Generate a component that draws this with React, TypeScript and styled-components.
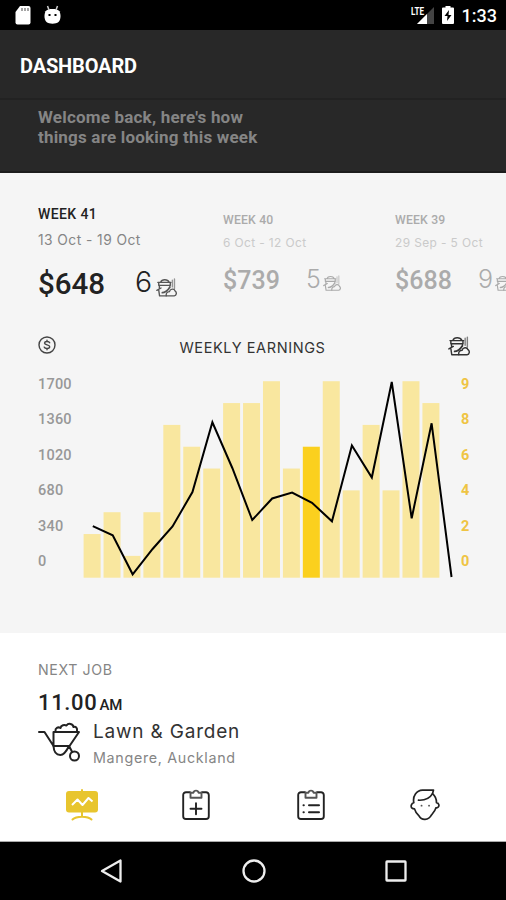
import styled, { createGlobalStyle } from 'styled-components';

const GlobalStyle = createGlobalStyle`
  * {
    box-sizing: border-box;
  }

  body {
    margin: 0;
    background: #f5f5f5;
    font-family: Roboto, sans-serif;
  }

  svg {
    display: block;
    flex-shrink: 0;
  }
`;

const Screen = styled.div`
  display: flex;
  flex-direction: column;
  width: 506px;
  height: 900px;
  overflow: hidden;
  background: #f5f5f5;
`;

const StatusBar = styled.div`
  display: flex;
  align-items: center;
  height: 30px;
  padding: 0 9px 0 14px;
  background: #000;
  color: #fff;
`;

const StatusIcons = styled.div`
  display: flex;
  gap: 13px;
  margin-right: auto;
`;

const BatteryIcon = styled.svg`
  margin-left: 7px;
`;

const Clock = styled.span`
  margin-left: 8px;
  padding-top: 2px;
  font-size: 18px;
  font-weight: 500;
  line-height: 24px;
`;

const Toolbar = styled.header`
  height: 70px;
  padding: 23px 20px 0;
  background: #282828;
  border-bottom: 2px solid #222;
`;

const Title = styled.h1`
  margin: 0;
  color: #fff;
  font-size: 20px;
  font-weight: 700;
  line-height: 26px;
  letter-spacing: -0.15px;
`;

const Welcome = styled.p`
  height: 73px;
  margin: 0;
  padding: 7px 38px 0;
  background: #282828;
  border-bottom: 2px solid #1d1d1d;
  color: #858585;
  font-size: 17px;
  font-weight: 700;
  line-height: 20px;
  letter-spacing: 0.2px;
`;

const Weeks = styled.section`
  display: flex;
  height: 157px;
  padding: 31px 0 0 38px;
  overflow: hidden;
`;

const WeekCard = styled.div<{ $active?: boolean; $width: number }>`
  flex: 0 0 ${({ $width }) => $width}px;
  padding-top: ${({ $active }) => ($active ? 0 : 7)}px;
  color: ${({ $active }) => ($active ? '#222' : '#ababab')};
`;

const WeekName = styled.div<{ $active?: boolean }>`
  font-size: ${({ $active }) => ($active ? 14 : 12.2)}px;
  font-weight: 500;
  line-height: ${({ $active }) => ($active ? 20 : 18)}px;
  letter-spacing: ${({ $active }) => ($active ? 0.4 : 0.2)}px;
`;

const WeekDates = styled.div<{ $active?: boolean }>`
  margin-top: ${({ $active }) => ($active ? 7 : 5)}px;
  color: ${({ $active }) => ($active ? '#858585' : '#cacaca')};
  font-family: Inter, sans-serif;
  font-size: ${({ $active }) => ($active ? 13.8 : 11.9)}px;
  font-weight: 400;
  line-height: 18px;
  letter-spacing: ${({ $active }) => ($active ? 0.45 : 0.4)}px;
`;

const WeekTotals = styled.div<{ $active?: boolean }>`
  display: flex;
  align-items: flex-start;
  margin-top: ${({ $active }) => ($active ? 16 : 12)}px;
`;

const Earned = styled.span<{ $active?: boolean }>`
  width: ${({ $active }) => ($active ? 97 : 83)}px;
  padding-top: ${({ $active }) => ($active ? 1 : 0)}px;
  font-size: ${({ $active }) => ($active ? 29.5 : 25)}px;
  font-weight: 500;
  line-height: ${({ $active }) => ($active ? 36 : 33)}px;
`;

const JobCount = styled.span<{ $active?: boolean }>`
  width: ${({ $active }) => ($active ? 21 : 17)}px;
  font-family: Inter, sans-serif;
  font-size: ${({ $active }) => ($active ? 28.5 : 25)}px;
  font-weight: 300;
  line-height: ${({ $active }) => ($active ? 34 : 31)}px;
`;

const BagSlot = styled.span<{ $active?: boolean }>`
  padding-top: ${({ $active }) => ($active ? 13 : 11)}px;
`;

const ChartPanel = styled.section`
  height: 303px;
  padding: 0 36px 0 38px;
`;

const ChartHeader = styled.div`
  display: flex;
  align-items: flex-start;
  justify-content: space-between;
  height: 51px;
  padding-top: 6px;
`;

const ChartTitle = styled.h2`
  margin: 2px 0 0 1px;
  color: #333;
  font-family: Inter, sans-serif;
  font-size: 14.5px;
  font-weight: 400;
  line-height: 20px;
  letter-spacing: 0.6px;
`;

const ChartBody = styled.div`
  display: flex;
`;

const Axis = styled.div<{ $gold?: boolean }>`
  display: flex;
  flex-direction: column;
  width: ${({ $gold }) => ($gold ? 9 : 45)}px;
  margin: -14px 0 0 ${({ $gold }) => ($gold ? 7 : 0)}px;
  color: ${({ $gold }) => ($gold ? '#efc443' : '#989898')};
  font-size: 14.5px;
  font-weight: ${({ $gold }) => ($gold ? 700 : 500)};
  line-height: 35.4px;
  letter-spacing: 0.2px;
`;

const Job = styled.section`
  height: 140px;
  padding: 27px 38px 0;
  background: #fff;
`;

const JobLabel = styled.div`
  color: #858585;
  font-family: Inter, sans-serif;
  font-size: 14.2px;
  line-height: 20px;
  letter-spacing: 0.6px;
`;

const JobTime = styled.div`
  margin-top: 10px;
  color: #222;
  font-size: 22px;
  font-weight: 500;
  line-height: 26px;
  letter-spacing: 0.65px;
`;

const Meridiem = styled.span`
  margin-left: 2px;
  font-size: 15px;
  letter-spacing: 0;
`;

const JobRow = styled.div`
  display: flex;
  gap: 12px;
  margin-top: 2px;
`;

const JobIcon = styled.div`
  padding-top: 2px;
`;

const JobName = styled.div`
  color: #333;
  font-family: Inter, sans-serif;
  font-size: 19px;
  line-height: 23px;
  letter-spacing: 0.8px;
`;

const JobPlace = styled.div`
  margin-top: 5px;
  color: #858585;
  font-family: Inter, sans-serif;
  font-size: 14.3px;
  line-height: 20px;
  letter-spacing: 0.68px;
`;

const TabBar = styled.nav`
  display: flex;
  align-items: flex-start;
  height: 69px;
  padding: 15px 24px 0 25px;
  background: #fff;
  border-bottom: 1px solid #aaa;
`;

const Tab = styled.a`
  display: flex;
  flex: 1;
  justify-content: center;
`;

const SystemNav = styled.div`
  display: flex;
  align-items: center;
  justify-content: space-between;
  height: 58px;
  padding: 0 99px 0 99px;
  background: #000;
`;

const weeks = [
  { name: 'WEEK 41', dates: '13 Oct - 19 Oct', earned: '$648', jobs: 6, width: 185, active: true },
  { name: 'WEEK 40', dates: '6 Oct - 12 Oct', earned: '$739', jobs: 5, width: 172 },
  { name: 'WEEK 39', dates: '29 Sep - 5 Oct', earned: '$688', jobs: 9, width: 172 },
];

const jobsPerWeek = [2, 3, 1, 3, 7, 6, 5, 8, 8, 9, 5, 6, 9, 4, 7, 4, 9, 8];
const currentBar = 11;

// line heights, measured down from the top of the plot
const earningsLine = [
  145.2, 154.3, 193.3, 168, 145.5, 111, 41.3, 87, 139, 117.5, 111.5, 121.8, 140.3, 64.5, 96.5, 1,
  137.3, 42.3, 196,
];

const PITCH = 19.93;
const UNIT = 21.83;
const PLOT_HEIGHT = 197;

const BagIcon = ({ size, color }: { size: number; color: string }) => (
  <svg width={size} height={size * 0.9} viewBox="0 0 20 18" fill="none" stroke={color} strokeWidth="1.3" strokeLinejoin="round" strokeLinecap="round">
    <path d="M1.8 4.2h12.4M2.6 4.2V7h11V4.2M4.5 3.8C5.5 1 11 .8 12.5 3.8" />
    <path d="M3.2 7v2.5M13.2 7v2.2M.8 11.8l4-2.3M2.6 11.5 3.4 17h6.4" />
    <path d="M6 14c2 0 5.5-2 6.8-4.8" strokeWidth="1.6" />
    <path d="M17.6 1v9M15.6 2v6.5" opacity=".6" />
    <path d="M9.8 17c-.5-2.8 1.3-4 3-4 .7-2.8 4.4-3.3 5.4-.6 1.9 1.3 1.3 4.5-.8 4.6Z" />
  </svg>
);

const CoinIcon = () => (
  <svg width="18" height="18" viewBox="0 0 18 18" fill="none" stroke="#444" strokeWidth="1.4" strokeLinecap="round">
    <circle cx="9" cy="9" r="8" />
    <path d="M11.7 6.8C11 5 6.7 5 6.5 7.1c0 2.2 5.2 1.3 5.2 3.7 0 2.3-4.8 2.3-5.5.3M9 4.2v1.3M9 12.5v1.3" />
  </svg>
);

const BarrowIcon = () => (
  <svg width="43" height="40" viewBox="0 0 43 40" fill="none" stroke="#222" strokeWidth="2" strokeLinecap="round" strokeLinejoin="round">
    <path d="M1 10h5.5L15.5 24h16L41 10H15.5v14" />
    <path d="M17.5 9c-.5-3 2.5-4.500 5-3 .5-3 4-3.500 6-2.500 2-3 6.500-1.500 7 1.500 2.500-.8 4 1 3.500 4" />
    <path d="M15.500 24c.3 5.500 2.800 9 6.800 9s6.500-4.500 8.700-9M31 24l3.200 6" />
    <circle cx="36.500" cy="34" r="4.500" />
  </svg>
);

const BoardIcon = () => (
  <svg width="32" height="34" viewBox="0 0 32 34" fill="none">
    <rect x="0" y="3" width="32" height="21.5" rx="3" fill="#e8c52e" />
    <path d="M16 2v3M16 24v4.500M6.500 31.500c2-2 5-2.800 9.500-2.800s7.500.8 9.500 2.800" stroke="#e8c52e" strokeWidth="2" strokeLinecap="round" />
    <path d="m6 17 5.500-5.500 5 5.500 6-7 4 3.500" stroke="#fff" strokeWidth="2" strokeLinejoin="round" />
  </svg>
);

const ClipboardIcon = ({ list }: { list?: boolean }) => (
  <svg width="28" height="33" viewBox="0 -.7 28 33" fill="none" stroke="#222" strokeWidth="1.9" strokeLinecap="round" strokeLinejoin="round">
    <path d="M8 3.5H4A2.8 2.8 0 0 0 1.2 6.3v21.2A2.8 2.8 0 0 0 4 30.3h20a2.8 2.8 0 0 0 2.8-2.8V6.3A2.8 2.8 0 0 0 24 3.5h-4" />
    <path d="M8.5 4h3C12 1.2 16 1.2 16.500 4h3v5h-11Z" stroke="#555" />
    {list ? (
      <path d="M6.5 16.6h.3M12 16.6h10M6.5 23.6h.3M12 23.6h10" strokeWidth="2" />
    ) : (
      <path d="M14 14.5v11M8.5 20h11" />
    )}
  </svg>
);

const FaceIcon = () => (
  <svg width="30" height="33" viewBox="0 -.7 30 33" fill="none" stroke="#222" strokeWidth="1.7" strokeLinecap="round" strokeLinejoin="round">
    <path d="M3.8 14C2.5 7 6.5 1.8 12.5 1.5c4 0 7-.2 11-.2l-1 3.7c3 2.5 4 5.5 4 9 2.4.5 3 3 1.8 4.3-.7.8-1.5.7-2.4.9-.7 3-2.500 4.800-4.400 7C18.500 32 11.500 32 9 27.200c-2.200-2.200-3.800-4-4.500-7-1 0-2-.3-2.800-1C.5 17.500 1.500 14.500 3.800 14Z" />
    <path d="M22.5 5C20 9.5 14.5 11.8 8.500 11.500" />
    <path d="M11.5 17h.1M19 17h.1" strokeWidth="1.8" stroke="#555" />
  </svg>
);

const EarningsChart = () => (
  <svg width="371" height={PLOT_HEIGHT} viewBox={`0 0 371 ${PLOT_HEIGHT}`} overflow="visible">
    {jobsPerWeek.map((jobs, i) => (
      <rect
        key={i}
        x={0.6 + i * PITCH}
        y={PLOT_HEIGHT - 0.3 - jobs * UNIT}
        width="17"
        height={jobs * UNIT}
        fill={i === currentBar ? '#fbd01e' : '#f9e79f'}
      />
    ))}
    <polyline
      points={earningsLine.map((y, i) => `${9.8 + i * PITCH},${y}`).join(' ')}
      fill="none"
      stroke="#000"
      strokeWidth="2"
    />
  </svg>
);

const App = () => {
  return (
    <>
      <GlobalStyle />
      <Screen>
        <StatusBar>
          <StatusIcons>
            <svg width="17" height="20" viewBox="0 0 17 20">
              <path d="M6 1h8.5A2 2 0 0 1 16.5 3v14.5a2 2 0 0 1-2 2h-11a2 2 0 0 1-2-2V7Z" fill="#fff" />
              <path d="M8 3v3M11 3v3M14 3v3" stroke="#888" strokeWidth="1.5" />
            </svg>
            <svg width="17" height="20" viewBox="0 0 17 20">
              <path d="M1.5 6.2C3 4.5 5 4 8.5 4s5.5.5 7 2.2C17 10 17 14 14.5 17c-2.5 2.3-9.500 2.300-12 0C0 14 0 10 1.500 6.200Z" fill="#fff" />
              <path d="m3.5 1 1.5 4M13.5 1 12 5" stroke="#ccc" strokeWidth="1.5" />
              <path d="M4.5 10h2M10.5 10h2" stroke="#000" strokeWidth="2" />
            </svg>
          </StatusIcons>
          <svg width="24" height="22" viewBox="0 0 24 22">
            <path d="M23 3v17H6Z" fill="#444" />
            <path d="M16 10v10H6Z" fill="#fff" />
            <text x="0" y="11" fill="#fff" fontFamily="Roboto" fontSize="11" fontWeight="700" textLength="13" lengthAdjust="spacingAndGlyphs">
              LTE
            </text>
          </svg>
          <BatteryIcon width="12" height="20" viewBox="0 0 12 20">
            <path d="M3.5 1h5v1.5H11A1 1 0 0 1 12 3.5V18a1 1 0 0 1-1 1H1a1 1 0 0 1-1-1V3.5a1 1 0 0 1 1-1h2.5Z" fill="#fff" />
            <path d="m7 5-4.5 6h3L5 16l4.5-6H6.5Z" fill="#000" />
          </BatteryIcon>
          <Clock>1:33</Clock>
        </StatusBar>

        <Toolbar>
          <Title>DASHBOARD</Title>
        </Toolbar>
        <Welcome>
          Welcome back, here's how
          <br />
          things are looking this week
        </Welcome>

        <Weeks>
          {weeks.map(({ name, dates, earned, jobs, width, active }) => (
            <WeekCard key={name} $active={active} $width={width}>
              <WeekName $active={active}>{name}</WeekName>
              <WeekDates $active={active}>{dates}</WeekDates>
              <WeekTotals $active={active}>
                <Earned $active={active}>{earned}</Earned>
                <JobCount $active={active}>{jobs}</JobCount>
                <BagSlot $active={active}>
                  <BagIcon size={active ? 21 : 18} color={active ? '#555' : '#aaa'} />
                </BagSlot>
              </WeekTotals>
            </WeekCard>
          ))}
        </Weeks>

        <ChartPanel>
          <ChartHeader>
            <CoinIcon />
            <ChartTitle>WEEKLY EARNINGS</ChartTitle>
            <BagIcon size={22} color="#333" />
          </ChartHeader>
          <ChartBody>
            <Axis>
              {[1700, 1360, 1020, 680, 340, 0].map((value) => (
                <span key={value}>{value}</span>
              ))}
            </Axis>
            <EarningsChart />
            <Axis $gold>
              {[9, 8, 6, 4, 2, 0].map((value) => (
                <span key={value}>{value}</span>
              ))}
            </Axis>
          </ChartBody>
        </ChartPanel>

        <Job>
          <JobLabel>NEXT JOB</JobLabel>
          <JobTime>
            11.00
            <Meridiem>AM</Meridiem>
          </JobTime>
          <JobRow>
            <JobIcon>
              <BarrowIcon />
            </JobIcon>
            <div>
              <JobName>Lawn &amp; Garden</JobName>
              <JobPlace>Mangere, Auckland</JobPlace>
            </div>
          </JobRow>
        </Job>

        <TabBar>
          <Tab>
            <BoardIcon />
          </Tab>
          <Tab>
            <ClipboardIcon />
          </Tab>
          <Tab>
            <ClipboardIcon list />
          </Tab>
          <Tab>
            <FaceIcon />
          </Tab>
        </TabBar>

        <SystemNav>
          <svg width="24" height="26" viewBox="0 0 24 26">
            <path d="M21.5 2.5v21L3 13Z" fill="none" stroke="#eee" strokeWidth="2.3" strokeLinejoin="round" />
          </svg>
          <svg width="24" height="24" viewBox="0 0 24 24">
            <circle cx="12" cy="12" r="10.5" fill="none" stroke="#eee" strokeWidth="2.3" />
          </svg>
          <svg width="22" height="22" viewBox="0 0 22 22">
            <rect x="1.5" y="1.5" width="19" height="19" rx=".5" fill="none" stroke="#eee" strokeWidth="2.3" />
          </svg>
        </SystemNav>
      </Screen>
    </>
  );
};

export default App;
